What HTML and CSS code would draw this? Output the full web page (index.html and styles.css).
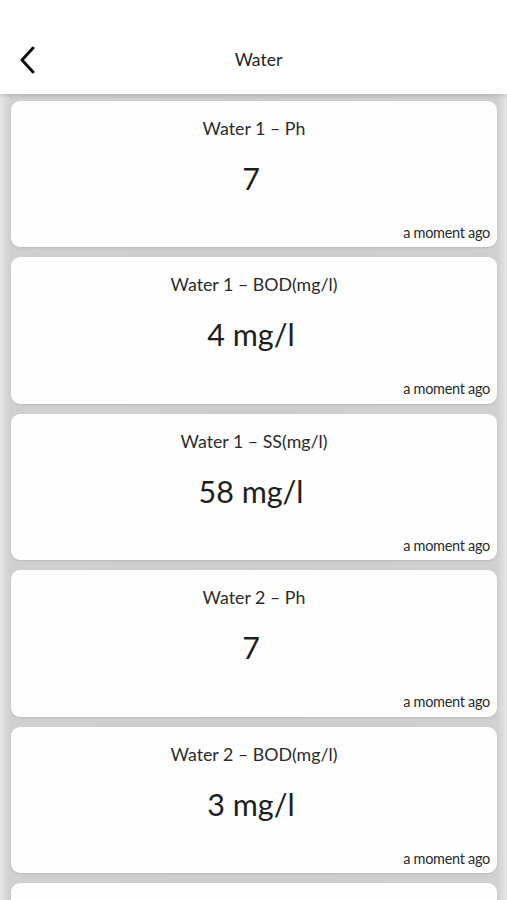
FILE: index.html
```html
<!DOCTYPE html>
<html lang="en">
<head>
    <meta charset="UTF-8">
    <meta name="viewport" content="width=device-width, initial-scale=1.0">
    <title>Water</title>
    <link rel="stylesheet" href="styles.css">
</head>
<body>
    <div class="header">
        <button class="back">
            <svg width="18" height="28" viewBox="0 0 18 28"><path d="M14 2 L3 14 L14 26" fill="none" stroke="#111" stroke-width="3" stroke-linecap="round" stroke-linejoin="round"/></svg>
        </button>
        <div class="title">Water</div>
    </div>

    <div class="list">
        <div class="card">
            <div class="name">Water 1 – Ph</div>
            <div class="value">7</div>
            <div class="time">a moment ago</div>
        </div>
        <div class="card">
            <div class="name">Water 1 – BOD(mg/l)</div>
            <div class="value">4 mg/l</div>
            <div class="time">a moment ago</div>
        </div>
        <div class="card">
            <div class="name">Water 1 – SS(mg/l)</div>
            <div class="value">58 mg/l</div>
            <div class="time">a moment ago</div>
        </div>
        <div class="card">
            <div class="name">Water 2 – Ph</div>
            <div class="value">7</div>
            <div class="time">a moment ago</div>
        </div>
        <div class="card">
            <div class="name">Water 2 – BOD(mg/l)</div>
            <div class="value">3 mg/l</div>
            <div class="time">a moment ago</div>
        </div>
        <!-- next card only peeks in at the bottom edge -->
        <div class="card"></div>
    </div>
</body>
</html>
```

FILE: styles.css
```css
body {
    margin: 0;
    font-family: Lato, "Open Sans", sans-serif;
    color: #222;
    background: #d2d2d2;
    height: 900px;
    overflow: hidden;
}
.header {
    position: relative;
    height: 94px;
    background: #fff;
    display: flex;
    align-items: flex-end;
    justify-content: center;
    box-shadow: 0 2px 4px rgba(0, 0, 0, 0.12);
    z-index: 1;
}
.back {
    position: absolute;
    left: 19px;
    top: 46px;
    border: none;
    background: none;
    padding: 0;
    margin: 0;
}
.title {
    font-size: 17.5px;
    color: #222;
    height: 50px;
    line-height: 32px;
    padding-left: 10px;
}
.list {
    display: flex;
    flex-direction: column;
    gap: 10px;
    padding: 7px 10px 0 11px;
    background: linear-gradient(to right, #e6e6e6 0, #d0d0d0 10px, #cdcdcd 50%, #d0d0d0 calc(100% - 10px), #e6e6e6 100%);
}
.card {
    height: 146.4px;
    flex-shrink: 0;
    box-sizing: border-box;
    background: #fefefe;
    border-radius: 9px;
    display: flex;
    flex-direction: column;
    padding: 17px 7px 0 7px;
    box-shadow: 0 1px 2px rgba(0, 0, 0, 0.1);
}
.name {
    text-align: center;
    font-size: 17.8px;
    line-height: 20px;
    color: #2b2b2b;
}
.value {
    text-align: center;
    font-size: 30.5px;
    line-height: 34px;
    margin-top: 23px;
    color: #1e1e1e;
    padding-right: 6px;
}
.time {
    text-align: right;
    font-size: 14.5px;
    line-height: 18px;
    margin-top: 29px;
    color: #2b2b2b;
    letter-spacing: -0.3px;
}
```
